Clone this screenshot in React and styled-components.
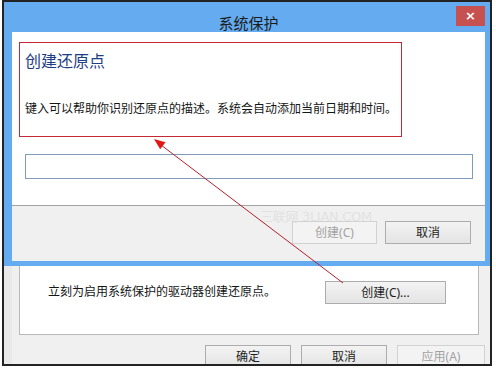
import React from 'react';
import styled, { createGlobalStyle } from 'styled-components';

const GlobalStyle = createGlobalStyle`
    html, body {
        margin: 0;
        padding: 0;
        background: #ffffff;
    }
    body {
        font-family: "Noto Sans", "Noto Sans CJK SC", sans-serif;
        color: #1e1e1e;
    }
`;

const Page = styled.div`
    position: relative;
    width: 496px;
    height: 368px;
    padding-left: 2px;
    box-sizing: border-box;
    overflow: hidden;
`;

const Frame = styled.div`
    width: 490px;
    height: 366px;
    box-sizing: border-box;
    border: 2px solid #232323;
    background: #f0f0f0;
    overflow: hidden;
    display: flex;
    flex-direction: column;
`;

const Dialog = styled.div`
    background: #65abf0;
    padding: 0 5px 5px 8px;
    display: flex;
    flex-direction: column;
`;

const TitleBar = styled.div`
    height: 30px;
    display: grid;
    grid-template-columns: 1fr auto 1fr;
    align-items: start;
`;

const Title = styled.div`
    grid-column: 2;
    font-size: 15px;
    line-height: 30px;
    padding-top: 6px;
    color: #1b1b1b;
`;

const CloseButton = styled.div`
    grid-column: 3;
    justify-self: end;
    margin-top: 4px;
    width: 29px;
    height: 20px;
    background: #c75050;
    color: #ffffff;
    font-family: "DejaVu Sans", sans-serif;
    font-weight: bold;
    font-size: 13px;
    line-height: 20px;
    text-align: center;
`;

const Body = styled.div`
    background: #ffffff;
    padding: 10px 0 26px 0;
`;

const Highlight = styled.div`
    margin-left: 7px;
    width: 383px;
    height: 95px;
    box-sizing: border-box;
    border: 1px solid #c42a35;
    padding: 7px 0 0 5px;
`;

const Heading = styled.div`
    font-size: 16px;
    line-height: 22px;
    color: #1d3d84;
`;

const Description = styled.div`
    margin-top: 28px;
    font-size: 12px;
    line-height: 18px;
    color: #151515;
    white-space: nowrap;
`;

const TextInput = styled.input`
    display: block;
    margin: 17px 0 0 13px;
    width: 448px;
    height: 25px;
    box-sizing: border-box;
    border: 1px solid #7f9db9;
    outline: none;
    background: #ffffff;
`;

const Footer = styled.div`
    position: relative;
    border-top: 1px solid #a3a3a3;
    background: #f0f0f0;
    padding: 15px 14px 17px 0;
    display: flex;
    justify-content: flex-end;
    gap: 8px;
`;

const Watermark = styled.div`
    position: absolute;
    left: 248px;
    top: 0;
    font-family: "DejaVu Sans", "Noto Sans CJK SC", sans-serif;
    font-size: 13px;
    letter-spacing: -0.3px;
    color: #e2e2e2;
    pointer-events: none;
`;

const Button = styled.div`
    width: ${p => p.$w || 86}px;
    height: 23px;
    box-sizing: border-box;
    border: 1px solid ${p => (p.$disabled ? '#d2d2d2' : '#acacac')};
    background: ${p =>
        p.$disabled ? '#f3f3f3' : 'linear-gradient(#f3f3f3, #e4e4e4)'};
    color: ${p => (p.$disabled ? '#a2a2a2' : '#1e1e1e')};
    font-size: 12px;
    line-height: 21px;
    text-align: center;
    flex-shrink: 0;
`;

const Lower = styled.div`
    flex: 1;
    display: flex;
    flex-direction: column;
    border-left: 8px solid #e9e9e9;
`;

const GroupBox = styled.div`
    margin-left: 7px;
    width: 460px;
    height: 69px;
    box-sizing: border-box;
    background: #ffffff;
    border: 1px solid #b9b9b9;
    border-top: none;
    padding: 15px 0 0 28px;
    display: flex;
    align-items: flex-start;
`;

const GroupText = styled.div`
    font-size: 12px;
    line-height: 18px;
    margin-top: 2px;
    width: 277px;
    white-space: nowrap;
    color: #151515;
`;

const ButtonRow = styled.div`
    margin-top: 10px;
    padding-right: 5px;
    display: flex;
    justify-content: flex-end;
    gap: 10px;
`;

const Overlay = styled.svg`
    position: absolute;
    left: 0;
    top: 0;
    pointer-events: none;
`;

const Arrow = () => (
    <Overlay width="496" height="368" viewBox="0 0 496 368">
        <line x1="343" y1="283" x2="161" y2="145" stroke="#b3202c" strokeWidth="1" />
        <polygon points="154,139 165.5,142.3 160.2,149.2" fill="#e01818" />
    </Overlay>
);

const App = () => (
    <>
        <GlobalStyle />
        <Page>
            <Frame>
                <Dialog>
                    <TitleBar>
                        <Title>系统保护</Title>
                        <CloseButton>×</CloseButton>
                    </TitleBar>
                    <Body>
                        <Highlight>
                            <Heading>创建还原点</Heading>
                            <Description>
                                键入可以帮助你识别还原点的描述。系统会自动添加当前日期和时间。
                            </Description>
                        </Highlight>
                        <TextInput type="text" />
                    </Body>
                    <Footer>
                        <Watermark>三联网 3LIAN.COM</Watermark>
                        <Button $w={85} $disabled>创建(C)</Button>
                        <Button>取消</Button>
                    </Footer>
                </Dialog>
                <Lower>
                    <GroupBox>
                        <GroupText>立刻为启用系统保护的驱动器创建还原点。</GroupText>
                        <Button $w={121}>创建(C)...</Button>
                    </GroupBox>
                    <ButtonRow>
                        <Button>确定</Button>
                        <Button>取消</Button>
                        <Button $w={88} $disabled>应用(A)</Button>
                    </ButtonRow>
                </Lower>
            </Frame>
            <Arrow />
        </Page>
    </>
);

export default App;
